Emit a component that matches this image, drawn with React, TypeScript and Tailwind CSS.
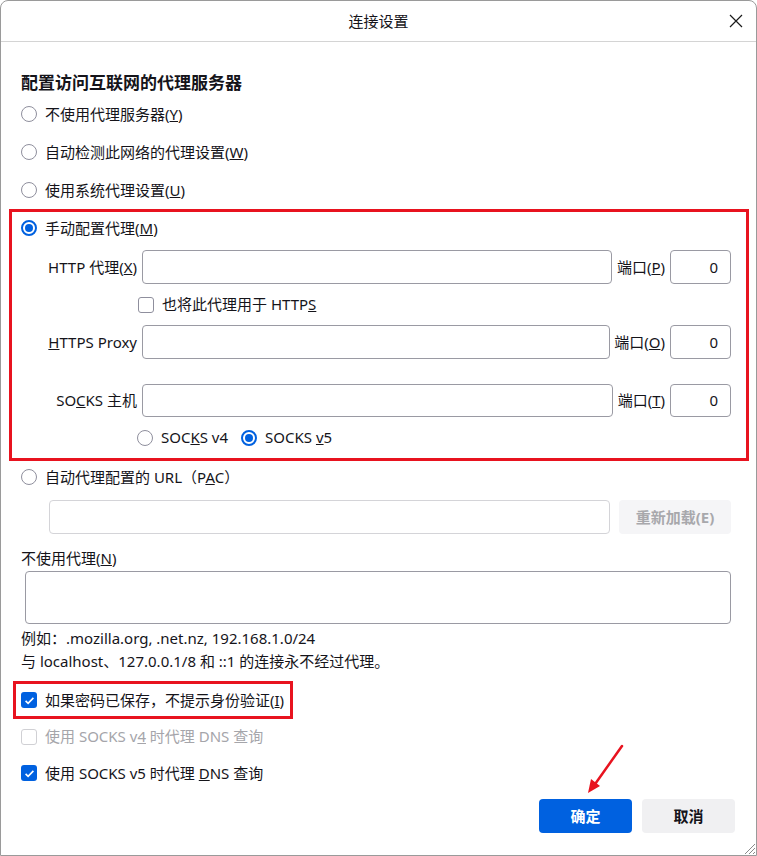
import React from "react";

const Radio = ({ checked }: { checked?: boolean }) =>
  checked ? (
    <span className="flex h-4 w-4 shrink-0 items-center justify-center rounded-full border-2 border-[#0061e0] bg-white">
      <span className="h-[8px] w-[8px] rounded-full bg-[#0061e0]" />
    </span>
  ) : (
    <span className="h-4 w-4 shrink-0 rounded-full border border-[#8f8f9d] bg-white" />
  );

const Check = ({ checked, disabled }: { checked?: boolean; disabled?: boolean }) => {
  if (checked) {
    return (
      <span className="flex h-4 w-4 shrink-0 items-center justify-center rounded-[3px] bg-[#0061e0]">
        <svg viewBox="0 0 16 16" className="h-[13px] w-[13px]">
          <path d="M3.2 8.4l3.1 3.1 6.5-6.8" stroke="white" strokeWidth="2" fill="none" />
        </svg>
      </span>
    );
  }
  return (
    <span
      className={
        disabled
          ? "h-4 w-4 shrink-0 rounded-[3px] border border-[#d0d0d4] bg-white"
          : "h-4 w-4 shrink-0 rounded-[3px] border border-[#8f8f9d] bg-white"
      }
    />
  );
};

const Field = ({ className, value }: { className: string; value?: string }) => (
  <div className={`flex items-center justify-end rounded-[4px] border border-[#9a9aa3] bg-white px-[12px] ${className}`}>
    {value}
  </div>
);

export default function App() {
  return (
    <div className="relative flex h-[856px] w-[757px] flex-col overflow-hidden rounded-t-[8px] border border-[#9a9a9a] bg-white font-['Noto_Sans','Noto_Sans_CJK_SC',sans-serif] text-[15px] text-[#15141a]">
      {/* title bar */}
      <div className="grid h-[41px] shrink-0 grid-cols-[1fr_auto_1fr] items-center border-b border-[#d4d4d4]">
        <div />
        <div className="text-[15px]">连接设置</div>
        <div className="mr-[13px] justify-self-end">
          <svg viewBox="0 0 14 14" className="h-[14px] w-[14px]">
            <path d="M1 1l12 12M13 1L1 13" stroke="#1a1a1a" strokeWidth="1.2" />
          </svg>
        </div>
      </div>

      <div className="flex flex-col pl-[20px] pr-[25px]">
        <div className="mt-[29px] text-[17px] font-bold leading-[24px]">配置访问互联网的代理服务器</div>

        <div className="flex h-[38px] items-center gap-2">
          <Radio />
          <span>不使用代理服务器(<u>Y</u>)</span>
        </div>
        <div className="flex h-[38px] items-center gap-2">
          <Radio />
          <span>自动检测此网络的代理设置(<u>W</u>)</span>
        </div>
        <div className="flex h-[38px] items-center gap-2">
          <Radio />
          <span>使用系统代理设置(<u>U</u>)</span>
        </div>

        {/* manual proxy, highlighted */}
        <div className="ml-[-12px] mr-[-18px] flex flex-col border-[3px] border-[#e8131f] pl-[9px] pr-[15px]">
          <div className="flex h-[32px] items-center gap-2">
            <Radio checked />
            <span>手动配置代理(<u>M</u>)</span>
          </div>
          <div className="mt-[6px] flex items-center">
            <div className="w-[116px] text-right">HTTP 代理(<u>X</u>)</div>
            <Field className="ml-[5px] h-[34px] flex-1" />
            <span className="ml-[5px]">端口(<u>P</u>)</span>
            <Field className="ml-[5px] h-[34px] w-[61px]" value="0" />
          </div>
          <div className="flex h-[41px] items-center gap-2 pl-[117px]">
            <Check />
            <span>也将此代理用于 HTTP<u>S</u></span>
          </div>
          <div className="flex items-center">
            <div className="w-[116px] text-right"><u>H</u>TTPS Proxy</div>
            <Field className="ml-[5px] h-[34px] flex-1" />
            <span className="ml-[4px]">端口(<u>O</u>)</span>
            <Field className="ml-[5px] h-[34px] w-[61px]" value="0" />
          </div>
          <div className="mt-[25px] flex items-center">
            <div className="w-[116px] text-right">SO<u>C</u>KS 主机</div>
            <Field className="ml-[5px] h-[33px] flex-1" />
            <span className="ml-[5px]">端口(<u>T</u>)</span>
            <Field className="ml-[5px] h-[33px] w-[61px]" value="0" />
          </div>
          <div className="flex h-[41px] items-center pl-[116px]">
            <Radio />
            <span className="ml-2">SOC<u>K</u>S v4</span>
            <span className="ml-[13px]"><Radio checked /></span>
            <span className="ml-2">SOCKS <u>v</u>5</span>
          </div>
        </div>

        <div className="flex h-[32px] items-center gap-2">
          <Radio />
          <span>自动代理配置的 URL（P<u>A</u>C）</span>
        </div>
        <div className="mt-[7px] flex items-center">
          <div className="ml-[28px] h-[34px] flex-1 rounded-[4px] border border-[#d4d4d8]" />
          <div className="ml-[9px] flex h-[34px] w-[112px] items-center justify-center rounded-[4px] bg-[#f5f5f7] font-bold text-[#a8a8ac]">
            重新加载(E)
          </div>
        </div>

        <div className="mt-[12px] leading-[24px]">不使用代理(<u>N</u>)</div>
        <div className="ml-[4px] mt-[1px] h-[53px] rounded-[4px] border border-[#9a9aa3]" />
        <div className="mt-[3px] leading-[23px]">例如：.mozilla.org, .net.nz, 192.168.1.0/24</div>
        <div className="leading-[23px]">与 localhost、127.0.0.1/8 和 ::1 的连接永不经过代理。</div>

        <div className="ml-[-8px] mt-[8px] flex h-[38px] w-[280px] items-center gap-2 border-[3px] border-[#e8131f] pl-[5px]">
          <Check checked />
          <span>如果密码已保存，不提示身份验证(<u>I</u>)</span>
        </div>
        <div className="flex h-[35px] items-center gap-2 text-[#a5a5aa]">
          <Check disabled />
          <span>使用 SOCKS v<u>4</u> 时代理 DNS 查询</span>
        </div>
        <div className="flex h-[38px] items-center gap-2">
          <Check checked />
          <span>使用 SOCKS v5 时代理 <u>D</u>NS 查询</span>
        </div>

        <div className="mr-[-4px] mt-[7px] flex justify-end gap-[10px]">
          <div className="flex h-[34px] w-[93px] items-center justify-center rounded-[4px] bg-[#0061e0] font-bold text-white">
            确定
          </div>
          <div className="flex h-[34px] w-[93px] items-center justify-center rounded-[4px] bg-[#f0f0f2] font-bold">
            取消
          </div>
        </div>
      </div>

      {/* annotation arrow */}
      <svg className="absolute left-[580px] top-[740px] h-[60px] w-[50px]" viewBox="0 0 50 60">
        <path d="M41 5L12 46" stroke="#e8131f" strokeWidth="2.5" strokeLinecap="round" />
        <path d="M7 52l3-14 9 7z" fill="#e8131f" />
      </svg>

      {/* resize grip */}
      <svg className="absolute bottom-0 right-0 h-[14px] w-[14px]" viewBox="0 0 14 14">
        <path d="M13 3L3 13M13 7L7 13M13 11L11 13" stroke="#8a8a8a" strokeWidth="1" />
      </svg>
    </div>
  );
}
